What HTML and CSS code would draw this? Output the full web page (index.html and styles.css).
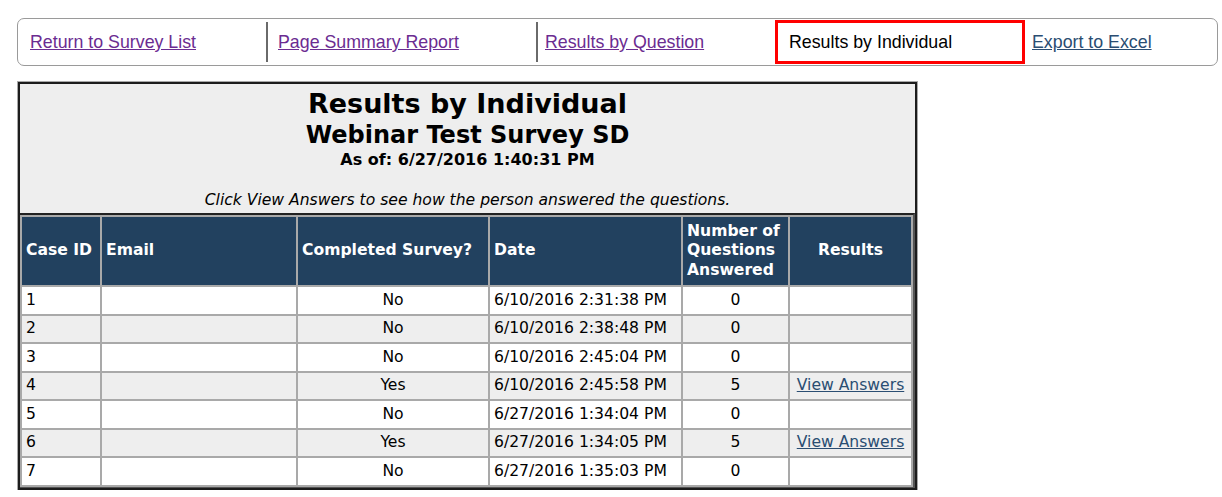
FILE: index.html
```html
<!DOCTYPE html>
<html lang="en">
<head>
  <meta charset="UTF-8">
  <title>Results by Individual</title>
  <link rel="stylesheet" href="styles.css">
</head>
<body>
  <nav class="tabs">
    <div class="tab tab-sep tab-1"><a class="visited" href="#">Return to Survey List</a></div>
    <div class="tab tab-sep tab-2"><a class="visited" href="#">Page Summary Report</a></div>
    <div class="tab tab-3"><a class="visited" href="#">Results by Question</a></div>
    <div class="tab tab-current">Results by Individual</div>
    <div class="tab tab-5"><a href="#">Export to Excel</a></div>
  </nav>

  <div class="report">
    <div class="report-head">
      <h1>Results by Individual</h1>
      <h2>Webinar Test Survey SD</h2>
      <p class="asof">As of: 6/27/2016 1:40:31 PM</p>
      <p class="hint">Click View Answers to see how the person answered the questions.</p>
    </div>

    <table class="results">
      <thead>
        <tr>
          <th class="c-id">Case ID</th>
          <th class="c-email">Email</th>
          <th class="c-done">Completed Survey?</th>
          <th class="c-date">Date</th>
          <th class="c-num">Number of Questions Answered</th>
          <th class="c-res center">Results</th>
        </tr>
      </thead>
      <tbody>
        <tr><td>1</td><td></td><td class="center">No</td><td>6/10/2016 2:31:38 PM</td><td class="center">0</td><td></td></tr>
        <tr><td>2</td><td></td><td class="center">No</td><td>6/10/2016 2:38:48 PM</td><td class="center">0</td><td></td></tr>
        <tr><td>3</td><td></td><td class="center">No</td><td>6/10/2016 2:45:04 PM</td><td class="center">0</td><td></td></tr>
        <tr><td>4</td><td></td><td class="center">Yes</td><td>6/10/2016 2:45:58 PM</td><td class="center">5</td><td class="center"><a href="#">View Answers</a></td></tr>
        <tr><td>5</td><td></td><td class="center">No</td><td>6/27/2016 1:34:04 PM</td><td class="center">0</td><td></td></tr>
        <tr><td>6</td><td></td><td class="center">Yes</td><td>6/27/2016 1:34:05 PM</td><td class="center">5</td><td class="center"><a href="#">View Answers</a></td></tr>
        <tr><td>7</td><td></td><td class="center">No</td><td>6/27/2016 1:35:03 PM</td><td class="center">0</td><td></td></tr>
      </tbody>
    </table>
  </div>
</body>
</html>
```

FILE: styles.css
```css
body {
  margin: 0;
  padding: 18px 0 0 17px;
  background-color: #fff;
  font-family: "DejaVu Sans", Verdana, sans-serif;
  color: #000;
}

/* top navigation */
.tabs {
  display: flex;
  align-items: center;
  box-sizing: border-box;
  width: 1201px;
  height: 48px;
  border: 1px solid #9a9a9a;
  border-radius: 7px;
  font-family: "Liberation Sans", Arial, sans-serif;
  font-size: 17.8px;
}

.tab {
  box-sizing: border-box;
  height: 40px;
  line-height: 40px;
  padding-left: 12px;
  white-space: nowrap;
}

.tab a {
  color: #2a4d72;
}

.tab a.visited {
  color: #6b2c91;
}

.tab-sep {
  border-right: 2px solid #6a6a6a;
}

.tab-1 { width: 250px; }
.tab-2 { width: 270px; padding-left: 10px; }
.tab-3 { width: 237px; padding-left: 7px; }

.tab-current {
  width: 250px;
  height: 44px;
  line-height: 38px;
  border: 3px solid #f00;
  padding-left: 11px;
}

.tab-5 { padding-left: 7px; }

/* report box */
.report {
  box-sizing: border-box;
  width: 899px;
  margin: 16px 0 0 1px;
  border: 2px solid #1c1c1c;
  box-shadow: 0 0 0 1px #a8a8a8;
  background-color: #eee;
}

.report-head {
  text-align: center;
  padding-top: 4px;
  padding-bottom: 3px;
}

.report-head h1 {
  margin: 0;
  font-size: 27px;
  line-height: 32px;
}

.report-head h2 {
  margin: 0;
  font-size: 24px;
  line-height: 31px;
}

.report-head .asof {
  margin: 0;
  font-size: 16px;
  font-weight: bold;
  line-height: 18px;
}

.report-head .hint {
  margin: 21px 0 0;
  font-size: 15.6px;
  font-style: italic;
  line-height: 20px;
}

.results {
  width: 895px;
  table-layout: fixed;
  border-collapse: separate;
  border-spacing: 2px;
  background-color: #a9a9a9;
  border-top: 2px solid #222;
  border-right: 2px solid #555;
  border-bottom: 1px solid #555;
  font-size: 15.6px;
}

.results th,
.results td {
  box-sizing: border-box;
  padding: 0 4px;
}

.results th {
  background-color: #22415f;
  color: #fff;
  text-align: left;
  height: 68px;
  line-height: 19.5px;
}

.results td {
  background-color: #fff;
  height: 26.5px;
  line-height: 19px;
}

.results tbody tr:nth-child(even) td {
  background-color: #eee;
}

.results .center {
  text-align: center;
}

.results td a {
  color: #2a4d72;
}

.c-id { width: 78px; }
.c-email { width: 194px; }
.c-done { width: 190px; }
.c-date { width: 191px; }
.c-num { width: 105px; }
```
